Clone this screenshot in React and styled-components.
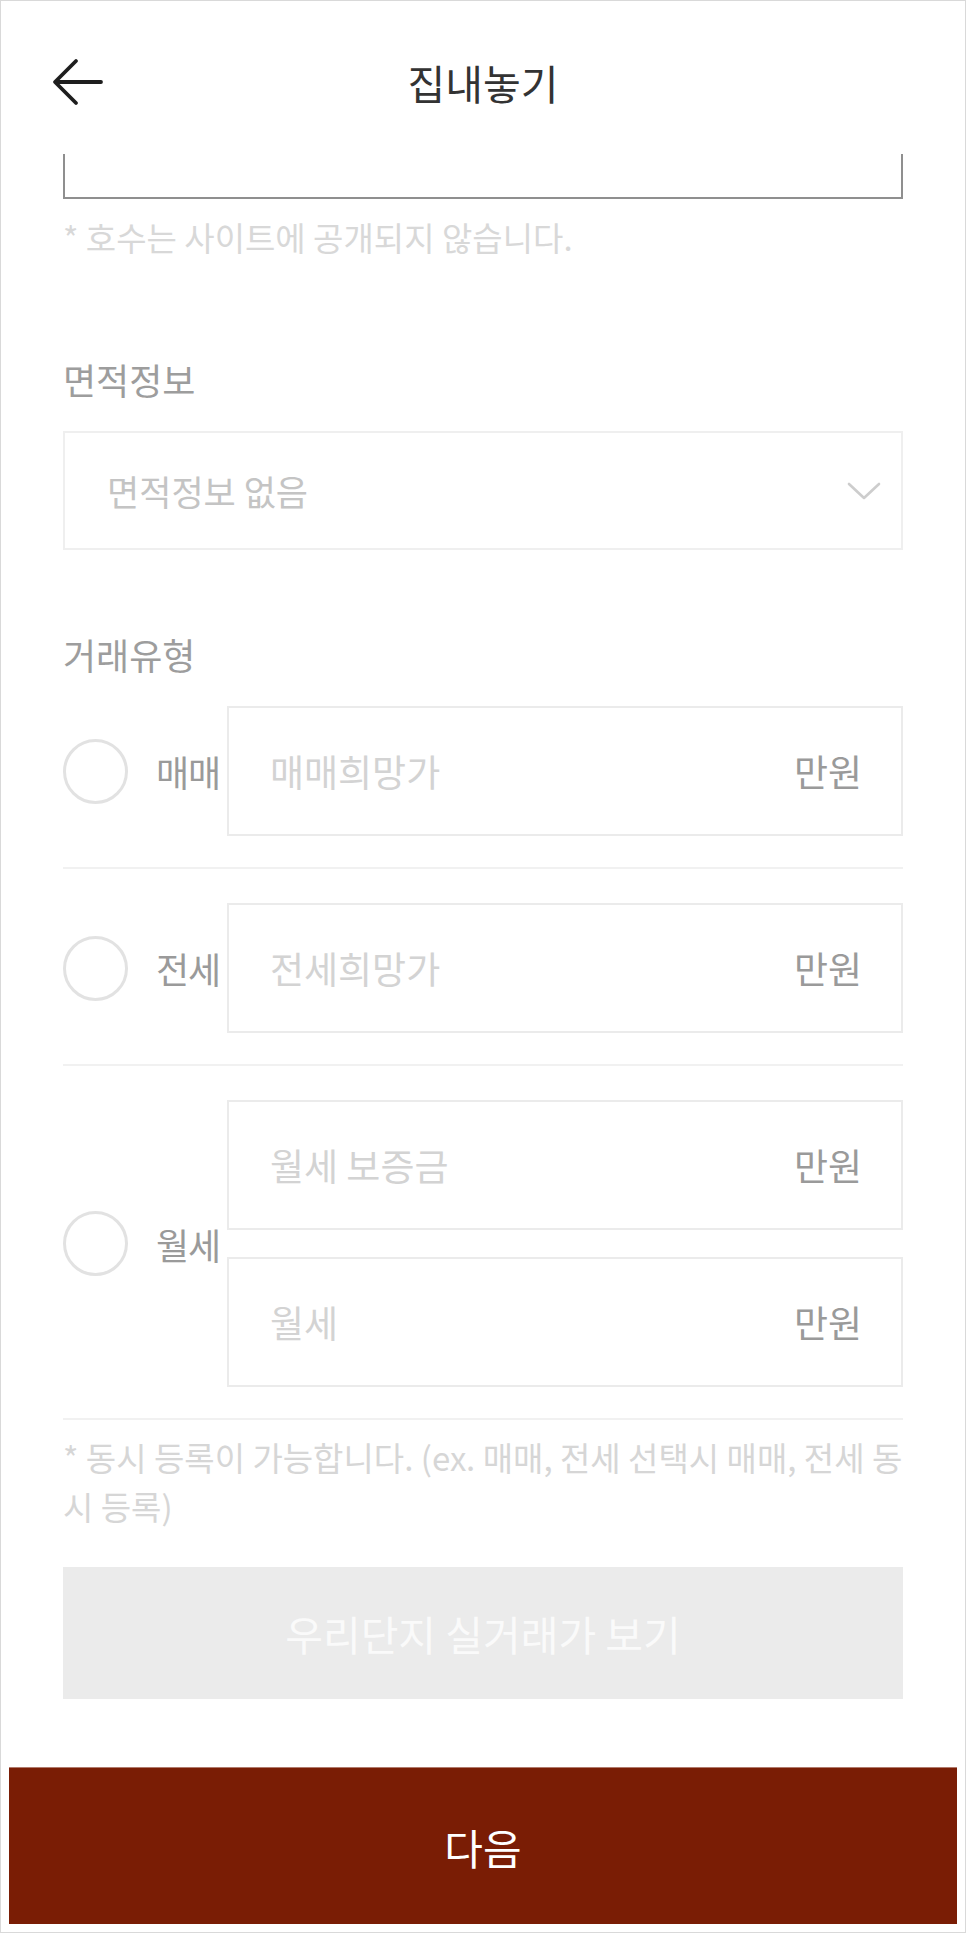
import styled, { createGlobalStyle } from 'styled-components';

const GlobalStyle = createGlobalStyle`
    * {
        box-sizing: border-box;
    }
    body {
        margin: 0;
        background: #fff;
        font-family: "Noto Sans CJK KR", "Noto Sans", sans-serif;
    }
`;

const dealTypes = [
    { name: '매매', fields: ['매매희망가'] },
    { name: '전세', fields: ['전세희망가'] },
    { name: '월세', fields: ['월세 보증금', '월세'] },
];

function BackArrow() {
    return (
        <svg width="54" height="48" viewBox="0 0 54 48" fill="none">
            <path d="M49 24H4M24 3L3 24L24 45" stroke="#1e1e1e" strokeWidth="3.8" strokeLinecap="round" strokeLinejoin="round" />
        </svg>
    );
}

function Chevron() {
    return (
        <svg width="34" height="18" viewBox="0 0 34 18" fill="none">
            <path d="M2 2L17 16L32 2" stroke="#cdcdcd" strokeWidth="2.6" strokeLinecap="round" strokeLinejoin="round" />
        </svg>
    );
}

export default function App() {
    return (
        <Frame>
            <GlobalStyle />
            <Header>
                <BackButton aria-label="뒤로">
                    <BackArrow />
                </BackButton>
                <Title>집내놓기</Title>
                <span />
            </Header>
            <Content>
                <HoInput />
                <Hint>* 호수는 사이트에 공개되지 않습니다.</Hint>

                <Label $top={99}>면적정보</Label>
                <Select>
                    <SelectText>면적정보 없음</SelectText>
                    <Chevron />
                </Select>

                <Label $top={82} $bottom={-4}>거래유형</Label>
                {dealTypes.map(type => (
                    <DealRow key={type.name}>
                        <Radio />
                        <DealName>{type.name}</DealName>
                        <Fields>
                            {type.fields.map(field => (
                                <PriceBox key={field}>
                                    <PriceInput placeholder={field} />
                                    <Unit>만원</Unit>
                                </PriceBox>
                            ))}
                        </Fields>
                    </DealRow>
                ))}

                <Note>* 동시 등록이 가능합니다. (ex. 매매, 전세 선택시 매매, 전세 동시 등록)</Note>
                <PriceButton>우리단지 실거래가 보기</PriceButton>
            </Content>
            <Footer>
                <NextButton>다음</NextButton>
            </Footer>
        </Frame>
    );
}

const Frame = styled.div`
    width: 966px;
    height: 1933px;
    border: 1px solid #d9d9d9;
    background: #fff;
    display: flex;
    flex-direction: column;
    overflow: hidden;
`;

const Header = styled.header`
    height: 153px;
    flex: none;
    padding: 8px 51px 0;
    display: grid;
    grid-template-columns: 1fr auto 1fr;
    align-items: center;
    background: #fff;
    position: relative;
    z-index: 1;
`;

const BackButton = styled.button`
    border: 0;
    background: none;
    padding: 0;
    width: 54px;
    height: 48px;
    display: flex;
    cursor: pointer;
`;

const Title = styled.h1`
    margin: 0;
    font-size: 41px;
    font-weight: 400;
    color: #333;
    line-height: 52px;
`;

const Content = styled.main`
    flex: 1;
    overflow: hidden;
    padding: 0 62px;
    display: flex;
    flex-direction: column;
`;

const HoInput = styled.div`
    flex: none;
    height: 118px;
    margin-top: -73px;
    border: 2px solid #8f8f8f;
`;

const Hint = styled.p`
    margin: 17px 0 0;
    font-size: 33px;
    line-height: 42px;
    color: #d8d8d8;
`;

const Label = styled.div`
    margin-top: ${props => props.$top}px;
    margin-bottom: ${props => props.$bottom || 0}px;
    font-size: 36px;
    line-height: 44px;
    color: #9d9d9d;
`;

const Select = styled.div`
    flex: none;
    margin-top: 30px;
    height: 119px;
    border: 2px solid #efefef;
    padding: 0 20px 0 42px;
    display: flex;
    align-items: center;
    justify-content: space-between;
`;

const SelectText = styled.span`
    font-size: 35px;
    color: #c4c4c4;
`;

const DealRow = styled.div`
    flex: none;
    display: flex;
    align-items: center;
    padding: 34px 0 31px;
    border-bottom: 2px solid #f1f1f1;
`;

const Radio = styled.span`
    flex: none;
    width: 65px;
    height: 65px;
    border-radius: 50%;
    border: 3px solid #e2e2e2;
`;

const DealName = styled.span`
    flex: none;
    width: 71px;
    margin-left: 28px;
    font-size: 36px;
    color: #9a9a9a;
    white-space: nowrap;
    letter-spacing: -1px;
`;

const Fields = styled.div`
    flex: 1;
    display: flex;
    flex-direction: column;
    gap: 27px;
`;

const PriceBox = styled.label`
    height: 130px;
    border: 2px solid #ebebeb;
    padding: 0 39px 0 41px;
    display: flex;
    align-items: center;
`;

const PriceInput = styled.input`
    flex: 1;
    min-width: 0;
    border: 0;
    outline: none;
    padding: 0;
    background: none;
    font-family: inherit;
    font-size: 37px;
    color: #555;
    &::placeholder {
        color: #d3d3d3;
    }
`;

const Unit = styled.span`
    font-size: 37px;
    color: #9a9a9a;
`;

const Note = styled.p`
    margin: 13px 0 0;
    font-size: 33px;
    line-height: 49px;
    color: #d6d6d6;
`;

const PriceButton = styled.button`
    flex: none;
    margin-top: 36px;
    height: 132px;
    border: 0;
    background: #ebebeb;
    color: #fafafa;
    font-family: inherit;
    font-size: 41px;
`;

const Footer = styled.footer`
    flex: none;
    padding: 0 8px 8px;
`;

const NextButton = styled.button`
    width: 100%;
    height: 157px;
    border: 0;
    border-top: 1px solid #b07a6c;
    background: #7a1d05;
    color: #fff;
    font-family: inherit;
    font-size: 42px;
`;
